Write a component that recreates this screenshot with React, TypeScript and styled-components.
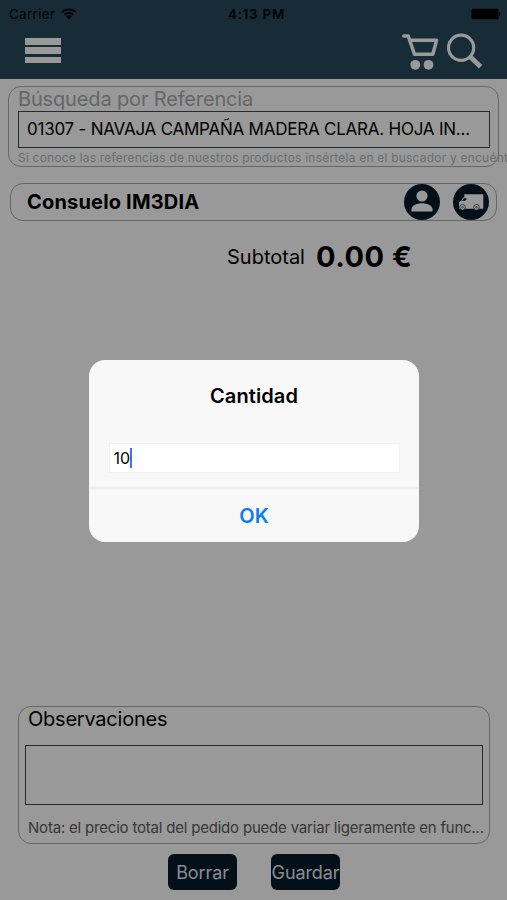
import React from "react";
import styled, { createGlobalStyle } from "styled-components";

const Global = createGlobalStyle`
  * { box-sizing: border-box; }
  body { margin: 0; background: #fff; overflow: hidden; font-family: Inter, "Liberation Sans", sans-serif; }
  button { font-family: inherit; border: 0; padding: 0; margin: 0; }
`;

const Screen = styled.div`
  position: relative;
  width: 507px;
  height: 900px;
  overflow: hidden;
  display: flex;
  flex-direction: column;
  background: #fff;
`;

const Header = styled.header`
  flex: none;
  height: 79px;
  background: #294a5e;
`;

const StatusBar = styled.div`
  display: grid;
  grid-template-columns: 1fr auto 1fr;
  align-items: center;
  height: 27px;
  padding: 0 5px 0 9px;
`;

const StatusLeft = styled.div`
  display: flex;
  align-items: center;
  gap: 6px;
`;

const StatusRight = styled.div`
  display: flex;
  justify-content: flex-end;
  padding-right: 1px;
`;

const Label = styled.span<{
  $size: number;
  $weight?: number;
  $spacing?: number;
  $color?: string;
  $line?: number;
}>`
  display: block;
  white-space: nowrap;
  font-size: ${(p) => p.$size}px;
  font-weight: ${(p) => p.$weight ?? 400};
  letter-spacing: ${(p) => p.$spacing ?? 0}px;
  color: ${(p) => p.$color ?? "#000"};
  line-height: ${(p) => (p.$line ? `${p.$line}px` : "normal")};
`;

const Clock = styled(Label)`
  padding-left: 2px;
`;

const NavBar = styled.nav`
  display: flex;
  justify-content: space-between;
  height: 52px;
  padding: 5px 23px 0 25px;
`;

const MenuButton = styled.button`
  display: flex;
  flex-direction: column;
  justify-content: space-between;
  width: 36px;
  height: 25px;
  margin-top: 6px;
  background: none;
`;

const MenuLine = styled.span`
  height: 6.5px;
  background: #fff;
`;

const NavIcons = styled.div`
  display: flex;
  gap: 8px;
`;

const SearchPanel = styled.section`
  flex: none;
  width: 491px;
  height: 81px;
  margin: 7px 0 0 8px;
  padding: 0 9px;
  border: 1px solid #aaa;
  border-radius: 13px;
`;

const SearchField = styled.div`
  display: flex;
  align-items: center;
  width: 472px;
  height: 37px;
  padding: 0 0 2px 8px;
  border: 1px solid #3c484d;
`;

const CustomerBar = styled.section`
  flex: none;
  display: flex;
  align-items: center;
  width: 487px;
  height: 38px;
  margin: 16px 0 0 10px;
  padding: 0 7px 0 16px;
  border: 1px solid #aaa;
  border-radius: 13px;
`;

const CustomerActions = styled.div`
  display: flex;
  gap: 13px;
  margin-left: auto;
`;

const RoundButton = styled.button`
  width: 36px;
  height: 36px;
  border-radius: 50%;
  background: #051b2a;
  overflow: hidden;
`;

const Subtotal = styled.div`
  flex: none;
  display: flex;
  align-items: center;
  gap: 11px;
  height: 40px;
  margin: 15px 0 0 227px;
`;

const SubtotalLabel = styled(Label)`
  padding-top: 2px;
`;

const Notes = styled.section`
  flex: none;
  width: 472px;
  height: 138px;
  margin: auto 0 0 18px;
  padding: 0 6px;
  border: 1px solid #aaa;
  border-radius: 13px;
`;

const NotesField = styled.div`
  width: 458px;
  height: 60px;
  margin: 14px 0 12px;
  border: 1px solid #3c484d;
`;

const Indent = styled.div`
  padding-left: 3px;
`;

const Footer = styled.footer`
  flex: none;
  display: flex;
  gap: 34px;
  height: 56px;
  padding: 10px 0 0 168px;
`;

const ActionButton = styled.button`
  display: flex;
  align-items: center;
  justify-content: center;
  width: 69px;
  height: 36px;
  border-radius: 6px;
  background: #051b2a;
`;

const Backdrop = styled.div`
  position: absolute;
  inset: 0;
  background: rgba(0, 0, 0, 0.4);
`;

const Dialog = styled.div`
  width: 330px;
  height: 182px;
  margin: 360px 0 0 89px;
  border-radius: 16px;
  background: #f8f8f8;
  overflow: hidden;
  display: flex;
  flex-direction: column;
`;

const DialogBody = styled.div`
  height: 129px;
  padding-top: 24px;
  display: flex;
  flex-direction: column;
  align-items: center;
  border-bottom: 2px solid #ebecee;
`;

const QuantityField = styled.div`
  display: flex;
  align-items: center;
  width: 291px;
  height: 30px;
  margin-top: 34px;
  padding-left: 4px;
  border: 1px solid #f1f1f1;
  background: #fff;
`;

const Caret = styled.span`
  width: 2px;
  height: 20px;
  background: #4a6fe3;
`;

const DialogButton = styled.button`
  flex: 1;
  display: flex;
  align-items: center;
  justify-content: center;
  background: none;
`;

const WifiIcon = () => (
  <svg width="16" height="12" viewBox="0 0 16 12" fill="none" stroke="#000" strokeWidth="1.8">
    <path d="M1 4.2C5 .3 11 .3 15 4.2M3.5 6.8c2.6-2.4 6.4-2.4 9 0" />
    <path d="M5.2 8.4C6.8 7 9.2 7 10.8 8.4L8 11.3z" fill="#000" stroke="none" />
  </svg>
);

const BatteryIcon = () => (
  <svg width="30" height="12" viewBox="0 0 30 12">
    <rect x="0.5" y="0.7" width="27" height="10.6" rx="1.5" />
    <path d="M28.2 4c1.6.6 1.6 3.4 0 4z" />
  </svg>
);

const CartIcon = () => (
  <svg width="37" height="38" viewBox="0 0 37 38" fill="none" stroke="#fff" strokeWidth="3.5">
    <path d="M1.8 4h4.4l6.3 18.3h18.3L34.6 8.2H8" strokeLinecap="round" strokeLinejoin="round" />
    <circle cx="13.3" cy="32.8" r="4.9" fill="#fff" stroke="none" />
    <circle cx="26.5" cy="32.8" r="4.9" fill="#fff" stroke="none" />
  </svg>
);

const SearchIcon = () => (
  <svg width="37" height="38" viewBox="0 0 37 38" fill="none" stroke="#fff">
    <circle cx="14.1" cy="15.8" r="12.6" strokeWidth="3.2" />
    <path d="M23.2 24.8l10.4 10" strokeWidth="4.8" />
  </svg>
);

const UserIcon = () => (
  <svg width="36" height="36" viewBox="0 0 36 36" fill="#fff">
    <circle cx="18" cy="12" r="5.6" />
    <path d="M7.5 27.5v-2.3c0-4 6-6 10.5-6s10.5 2 10.5 6v2.3z" />
  </svg>
);

const VanIcon = () => (
  <svg width="36" height="36" viewBox="0 0 36 36" fill="#fff">
    <path d="M11.3 10.3h19v14.4H6V18l2.2-1.2 2-3.2h1.1z" />
    <path d="M8.8 16.6l2.1-2.4h2.5v1.8l-2.3 1z" fill="#051b2a" />
    <g stroke="#051b2a" strokeWidth="0.6">
      <circle cx="9.5" cy="23.2" r="2.8" />
      <circle cx="23.5" cy="23.2" r="2.8" />
    </g>
    <circle cx="9.5" cy="23.2" r="1.2" fill="#87939b" />
    <circle cx="23.5" cy="23.2" r="1.2" fill="#87939b" />
  </svg>
);

export default function App() {
  return (
    <Screen>
      <Global />
      <Header>
        <StatusBar>
          <StatusLeft>
            <Label $size={13.3} $spacing={0.4}>Carrier</Label>
            <WifiIcon />
          </StatusLeft>
          <Clock $size={13.3} $weight={600} $spacing={0.8}>4:13 PM</Clock>
          <StatusRight>
            <BatteryIcon />
          </StatusRight>
        </StatusBar>
        <NavBar>
          <MenuButton aria-label="Menú">
            <MenuLine />
            <MenuLine />
            <MenuLine />
          </MenuButton>
          <NavIcons>
            <CartIcon />
            <SearchIcon />
          </NavIcons>
        </NavBar>
      </Header>

      <SearchPanel>
        <Label $size={20} $line={24} $spacing={-0.15} $color="#aaa">Búsqueda por Referencia</Label>
        <SearchField>
          <Label $size={17} $spacing={-0.23}>01307 - NAVAJA CAMPAÑA MADERA CLARA. HOJA IN...</Label>
        </SearchField>
        <Label $size={12} $line={20} $spacing={0.21} $color="#b6b6b6">
          Si conoce las referencias de nuestros productos insértela en el buscador y encuént
        </Label>
      </SearchPanel>

      <CustomerBar>
        <Label $size={20} $weight={700} $spacing={0.18}>Consuelo IM3DIA</Label>
        <CustomerActions>
          <RoundButton aria-label="Cliente"><UserIcon /></RoundButton>
          <RoundButton aria-label="Envío"><VanIcon /></RoundButton>
        </CustomerActions>
      </CustomerBar>

      <Subtotal>
        <SubtotalLabel $size={20}>Subtotal</SubtotalLabel>
        <Label $size={29} $weight={700} $spacing={0.5}>0.00 €</Label>
      </Subtotal>

      <Notes>
        <Indent><Label $size={20} $line={24} $spacing={-0.23}>Observaciones</Label></Indent>
        <NotesField />
        <Indent>
          <Label $size={15} $line={22} $spacing={-0.2} $color="#5c5c5c">
            Nota: el precio total del pedido puede variar ligeramente en func...
          </Label>
        </Indent>
      </Notes>

      <Footer>
        <ActionButton><Label $size={18} $spacing={-0.1} $color="#e4e8ec">Borrar</Label></ActionButton>
        <ActionButton><Label $size={18} $spacing={-0.1} $color="#e4e8ec">Guardar</Label></ActionButton>
      </Footer>

      <Backdrop>
        <Dialog>
          <DialogBody>
            <Label $size={20} $weight={600} $line={25} $spacing={0.1}>Cantidad</Label>
            <QuantityField>
              <Label $size={16}>10</Label>
              <Caret />
            </QuantityField>
          </DialogBody>
          <DialogButton><Label $size={20} $weight={600} $color="#0a7cf8">OK</Label></DialogButton>
        </Dialog>
      </Backdrop>
    </Screen>
  );
}
